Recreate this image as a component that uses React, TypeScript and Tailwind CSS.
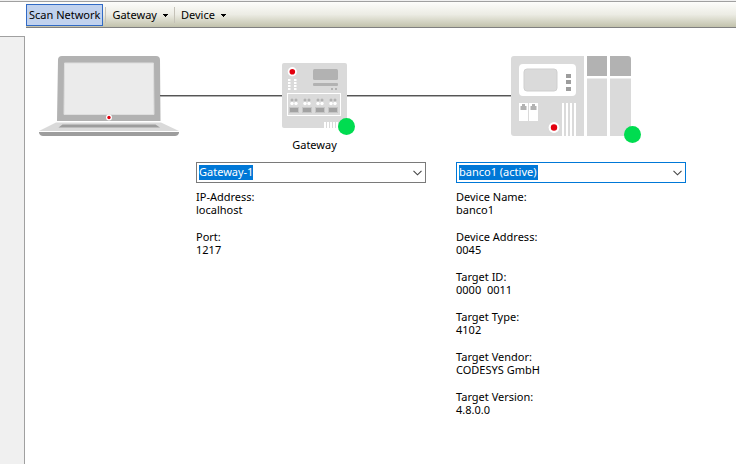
import React from "react";

type Field = { label: string; value: string };

function MenuButton({ label }: { label: string }) {
  return (
    <button type="button" className="flex h-6 items-center gap-1.5 px-1 pt-0.5 whitespace-nowrap">
      {label}
      <svg className="h-[3px] w-[5px]" viewBox="0 0 5 3">
        <path d="M0 0h5v1h-1v1h-1v1h-1v-1h-1v-1h-1z" fill="#000" shapeRendering="crispEdges" />
      </svg>
    </button>
  );
}

function Laptop() {
  return (
    <svg className="h-20 w-[140px] shrink-0" viewBox="0 0 140 80" role="img" aria-label="Computer">
      <path d="M18 65L19 4Q19 0 23 0H117Q121 0 121 4L121.500 65Z" fill="#b2b2b2" />
      <path d="M25.500 7H114.500L115 58.500H25Z" fill="#ebebeb" stroke="#dedede" strokeWidth="1" />
      <circle cx="70" cy="61.500" r="3" fill="#fff" />
      <circle cx="70" cy="61.500" r="1.700" fill="#e3000f" />
      <path d="M17 66.500H122L140 75H0Z" fill="#dadada" />
      <path d="M23.500 68.500H116.500L121 71.500H19.500Z" fill="#9d9d9d" />
      <path d="M0 75.500H140V77Q139 80 136 80H4Q1 80 0 77Z" fill="#9d9d9d" />
      <path d="M0 75.500H140" stroke="#fff" strokeWidth="1" />
    </svg>
  );
}

function GatewayBox() {
  return (
    <svg className="h-[65px] w-[65px]" viewBox="0 0 65 65" role="img" aria-label="Gateway">
      <rect width="65" height="65" rx="2" fill="#dadada" />
      <circle cx="10.300" cy="8.700" r="4.600" fill="#fff" />
      <circle cx="10.300" cy="8.700" r="2.800" fill="#e3000f" />
      <rect x="31" y="6" width="25" height="11" rx="1.500" fill="#b2b2b2" />
      <rect x="31" y="20" width="25" height="3" rx="1" fill="#b2b2b2" />
      <path d="M49 25h2v2h-2zM53 25h2v2h-2z" fill="#b2b2b2" />
      {[16, 19, 22, 25].map((y) => (
        <path key={y} d={`M6 ${y}h2.500v2h-2.500zM12 ${y}h2.500v2h-2.500z`} fill="#fff" />
      ))}
      <rect x="5.500" y="30.500" width="53" height="22" fill="#dadada" stroke="#fff" />
      {[7, 20, 33, 46].map((x) => (
        <g key={x}>
          <circle cx={x + 3} cy="37" r="1.500" fill="#b2b2b2" />
          <circle cx={x + 7} cy="37" r="1.500" fill="#b2b2b2" />
          <circle cx={x + 3} cy="40.500" r="1.700" fill="#fff" />
          <circle cx={x + 7} cy="40.500" r="1.700" fill="#fff" />
          <rect x={x + 0.5} y="44.500" width="9" height="5" fill="#a2a2a2" stroke="#c6c6c6" />
        </g>
      ))}
      {[42, 45, 48, 51, 54].map((x) => (
        <rect key={x} x={x} y="59" width="2" height="6" fill="#fff" />
      ))}
    </svg>
  );
}

function Controller() {
  return (
    <svg className="h-20 w-[120px]" viewBox="0 0 120 80" role="img" aria-label="Device">
      <path d="M3 0H73V80H3Q0 80 0 77V3Q0 0 3 0Z" fill="#dadada" />
      <path d="M76 0H96V20H76ZM99 0H117Q120 0 120 3V20H99Z" fill="#b2b2b2" />
      <path d="M76 22.500H96V80H76ZM99 22.500H120V77Q120 80 117 80H99Z" fill="#dadada" />
      <rect x="8" y="8" width="57" height="32" rx="4" fill="#fff" />
      <rect x="13" y="13" width="33" height="22" rx="3" fill="#dadada" stroke="#cfcfcf" strokeWidth="1" />
      {[18, 24, 31].map((y) => (
        <rect key={y} x="55" y={y} width="5" height="4" fill="#9d9d9d" />
      ))}
      {[8, 18].map((x) => (
        <g key={x}>
          <rect x={x} y="47" width="9" height="18" fill="#fff" />
          <path d={`M${x + 1.5} 54v-4h1.500v-2h3v2h1.500v4z`} fill="#b2b2b2" />
        </g>
      ))}
      <circle cx="43" cy="71.500" r="5.400" fill="#fff" />
      <circle cx="43" cy="71.500" r="3.200" fill="#e3000f" />
      {[51, 55, 59, 63].map((x) => (
        <rect key={x} x={x} y="47" width="2" height="33" fill="#fff" />
      ))}
    </svg>
  );
}

function Fields({ items }: { items: Field[] }) {
  return (
    <dl className="mt-[7px] space-y-3.5 leading-[13px]">
      {items.map((f) => (
        <div key={f.label}>
          <dt>{f.label}:</dt>
          <dd className="whitespace-pre">{f.value}</dd>
        </div>
      ))}
    </dl>
  );
}

function Combo({ label, value, className }: { label: string; value: string; className: string }) {
  return (
    <div className="relative">
      <select
        aria-label={label}
        defaultValue={value}
        className={
          "block h-[21px] w-full appearance-none border bg-white bg-[linear-gradient(#0078d7,#0078d7)] bg-no-repeat bg-[position:2px_2px] pl-0.5 pr-5 text-white outline-none " +
          className
        }
      >
        <option className="text-black">{value}</option>
      </select>
      <svg className="pointer-events-none absolute top-2 right-1 h-1.5 w-[9px]" viewBox="0 0 9 6">
        <path d="M0.500 0.800L4.500 4.800L8.500 0.800" fill="none" stroke="#444" strokeWidth="1.100" />
      </svg>
    </div>
  );
}

const gatewayFields: Field[] = [
  { label: "IP-Address", value: "localhost" },
  { label: "Port", value: "1217" },
];

const deviceFields: Field[] = [
  { label: "Device Name", value: "banco1" },
  { label: "Device Address", value: "0045" },
  { label: "Target ID", value: "0000  0011" },
  { label: "Target Type", value: "4102" },
  { label: "Target Vendor", value: "CODESYS GmbH" },
  { label: "Target Version", value: "4.8.0.0" },
];

export default function App() {
  return (
    <div className="flex min-h-screen flex-col bg-white font-['Noto_Sans',sans-serif] text-[11px] text-black">
      <div className="h-0.5 border-b border-[#a0a0a0] bg-[#f0f0f0]" />
      <div className="flex flex-1">
        <aside className="mt-[34px] w-[25px] shrink-0 border-t border-r border-[#a0a0a0] bg-[#f0f0f0]" />
        <div className="flex-1">
          <nav className="ml-px flex h-[26px] items-center border-b border-[#808080] bg-linear-to-b from-[#fdfdfb] via-[#ecece4] to-[#c2c2ac]">
            <button type="button" className="h-[22px] border border-[#316ac5] bg-[#c1d2ee] px-0.5 pt-0.5 whitespace-nowrap">
              Scan Network
            </button>
            <span className="mx-0.5 h-4 w-px bg-[#c5c2b8]" />
            <MenuButton label="Gateway" />
            <span className="mx-0.5 h-4 w-px bg-[#c5c2b8]" />
            <MenuButton label="Device" />
          </nav>
          <main className="pt-7 pl-3.5">
            <section className="flex h-[100px] items-start">
              <Laptop />
              <div className="mt-[39px] -ml-[19px] h-0.5 w-[122px] shrink-0 border-t border-[#555] bg-[#b0b0b0]" />
              <div className="relative mt-[7px] flex w-[65px] shrink-0 flex-col items-center">
                <GatewayBox />
                <span className="absolute top-[55px] left-14 size-[17px] rounded-full bg-[#00dc50]" />
                <span className="mt-[9px] leading-[15px]">Gateway</span>
              </div>
              <div className="mt-[39px] h-0.5 w-[164px] shrink-0 border-t border-[#555] bg-[#b0b0b0]" />
              <div className="relative shrink-0">
                <Controller />
                <span className="absolute top-[70px] left-[113px] size-[17px] rounded-full bg-[#00dc50]" />
              </div>
            </section>
            <section className="mt-1.5 ml-[157px] flex gap-[30px]">
              <div className="w-[230px]">
                <Combo label="Gateway" value="Gateway-1" className="border-[#7a7a7a] bg-[length:54px_15px]" />
                <Fields items={gatewayFields} />
              </div>
              <div className="w-[230px]">
                <Combo label="Device" value="banco1 (active)" className="border-[#0078d7] bg-[length:79px_15px]" />
                <Fields items={deviceFields} />
              </div>
            </section>
          </main>
        </div>
      </div>
    </div>
  );
}
